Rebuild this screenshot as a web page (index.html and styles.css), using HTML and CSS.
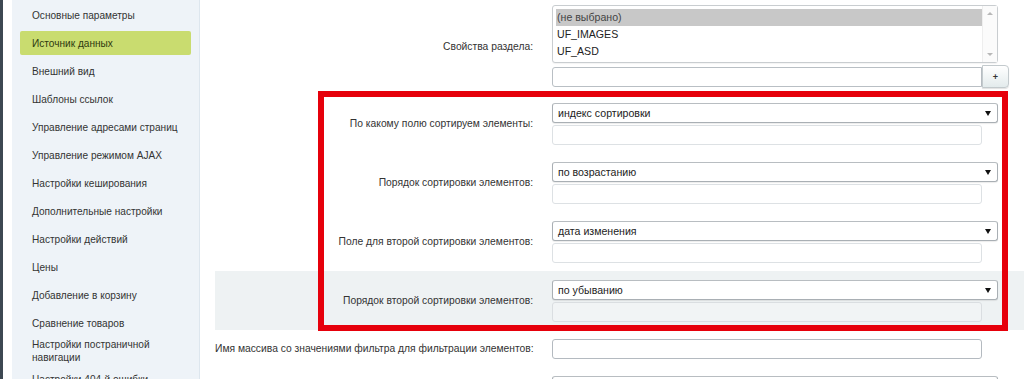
FILE: index.html
```html
<!DOCTYPE html>
<html lang="ru">
<head>
<meta charset="utf-8">
<title>Настройки компонента</title>
<link rel="stylesheet" href="styles.css">
</head>
<body>
<div class="page">
  <div class="rail"></div>
  <nav class="sidebar">
    <div class="nav-item">Основные параметры</div>
    <div class="nav-item active">Источник данных</div>
    <div class="nav-item">Внешний вид</div>
    <div class="nav-item">Шаблоны ссылок</div>
    <div class="nav-item">Управление адресами страниц</div>
    <div class="nav-item">Управление режимом AJAX</div>
    <div class="nav-item">Настройки кеширования</div>
    <div class="nav-item">Дополнительные настройки</div>
    <div class="nav-item">Настройки действий</div>
    <div class="nav-item">Цены</div>
    <div class="nav-item">Добавление в корзину</div>
    <div class="nav-item">Сравнение товаров</div>
    <div class="nav-item">Настройки постраничной навигации</div>
    <div class="nav-item">Настройки 404-й ошибки</div>
  </nav>
  <main class="main">
    <div class="row row-first">
      <div class="label">Свойства раздела:</div>
      <div class="controls">
        <div class="listbox">
          <div class="options">
            <div class="option selected">(не выбрано)</div>
            <div class="option">UF_IMAGES</div>
            <div class="option">UF_ASD</div>
          </div>
          <div class="scrollbar">
            <span class="sb-up"></span>
            <span class="sb-down"></span>
          </div>
        </div>
        <div class="add-line">
          <div class="input"></div>
          <div class="btn-add">+</div>
        </div>
      </div>
    </div>

    <div class="group">
      <div class="row">
        <div class="label">По какому полю сортируем элементы:</div>
        <div class="controls">
          <div class="select"><span>индекс сортировки</span><i class="arrow"></i></div>
          <div class="input light"></div>
        </div>
      </div>
      <div class="row">
        <div class="label">Порядок сортировки элементов:</div>
        <div class="controls">
          <div class="select"><span>по возрастанию</span><i class="arrow"></i></div>
          <div class="input light"></div>
        </div>
      </div>
      <div class="row">
        <div class="label">Поле для второй сортировки элементов:</div>
        <div class="controls">
          <div class="select"><span>дата изменения</span><i class="arrow"></i></div>
          <div class="input light"></div>
        </div>
      </div>
      <div class="row hover">
        <div class="label">Порядок второй сортировки элементов:</div>
        <div class="controls">
          <div class="select"><span>по убыванию</span><i class="arrow"></i></div>
          <div class="input disabled"></div>
        </div>
      </div>
      <div class="highlight"></div>
    </div>

    <div class="row row-single">
      <div class="label">Имя массива со значениями фильтра для фильтрации элементов:</div>
      <div class="controls">
        <div class="input dark"></div>
      </div>
    </div>
    <div class="row row-single">
      <div class="label"></div>
      <div class="controls">
        <div class="select"><span></span><i class="arrow"></i></div>
      </div>
    </div>
  </main>
</div>
</body>
</html>
```

FILE: styles.css
```css
* { box-sizing: border-box; }

html, body {
  margin: 0;
  padding: 0;
  background: #ffffff;
  height: 379px;
  overflow: hidden;
}

body {
  font-family: "Liberation Sans", Arial, sans-serif;
  font-size: 10.3px;
  color: #2b2b2b;
}

.page {
  display: flex;
  align-items: flex-start;
  height: 379px;
}

.rail {
  width: 3px;
  height: 379px;
  background: #3d4852;
  flex: none;
}

.sidebar {
  flex: none;
  width: 188px;
  height: 379px;
  margin-left: 9px;
  background: #eef3f8;
  border-right: 1px solid #dde6ee;
  padding: 3px 8px 0 8px;
  display: flex;
  flex-direction: column;
  gap: 4px;
  font-size: 10.1px;
}

.nav-item {
  min-height: 24px;
  padding: 1px 6px 1px 12px;
  display: flex;
  align-items: center;
  line-height: 13px;
  color: #333;
  border-radius: 2px;
}

.nav-item.active {
  background: #c9dc6f;
  color: #2f3a10;
}

.main {
  flex: 1;
  padding-left: 15px;
  display: flex;
  flex-direction: column;
  color: #333;
}

.row {
  display: flex;
  align-items: center;
  padding: 9px 0 8px 0;
}

.row-first {
  padding: 5px 0 6px 0;
}

.row.hover {
  background: #eef2f3;
}

.label {
  flex: none;
  width: 337px;
  padding-right: 19px;
  padding-bottom: 1px;
  text-align: right;
  line-height: 13px;
  white-space: nowrap;
}

.controls {
  display: flex;
  flex-direction: column;
  gap: 2px;
}

/* multi select */
.listbox {
  width: 446px;
  height: 58px;
  border: 1px solid #c9cdd0;
  border-radius: 3px;
  background: #fff;
  display: flex;
  box-shadow: 0 1px 1px rgba(0,0,0,0.05);
}

.options {
  flex: 1;
  padding: 3px 0 0 3px;
}

.option {
  height: 17px;
  line-height: 17px;
  padding-left: 1px;
  color: #222;
  font-size: 10.6px;
}

.option.selected {
  background: #c8c8c8;
  color: #444;
}

.scrollbar {
  flex: none;
  width: 15px;
  position: relative;
  background: #fbfbfb;
  border-left: 1px solid #eeeeee;
}

.sb-up, .sb-down {
  position: absolute;
  left: 4px;
  width: 0;
  height: 0;
  border-left: 3px solid transparent;
  border-right: 3px solid transparent;
}

.sb-up {
  top: 6px;
  border-bottom: 3px solid #b8b8b8;
}

.sb-down {
  bottom: 6px;
  border-top: 3px solid #b8b8b8;
}

.add-line {
  display: flex;
  align-items: center;
}

.input {
  width: 430px;
  height: 20px;
  background: #fff;
  border: 1px solid #b9bfc4;
  border-radius: 3px;
}

.add-line .input {
  height: 20px;
  border-radius: 3px 0 0 3px;
}

.input.light {
  border-color: #dde1e4;
}

.input.disabled {
  border-color: #dadee1;
  background: #f1f4f5;
}

.input.dark {
  border-color: #b4bac0;
}

.btn-add {
  width: 27px;
  height: 23px;
  border: 1px solid #c3cacd;
  border-radius: 0 4px 4px 0;
  background: linear-gradient(#ffffff, #e3ebec);
  color: #333;
  font-size: 9px;
  font-weight: bold;
  display: flex;
  align-items: center;
  justify-content: center;
  box-shadow: 0 1px 1px rgba(0,0,0,0.12);
}

/* dropdown */
.select {
  width: 446px;
  height: 20px;
  border: 1px solid #a9afb4;
  border-top-color: #b8bdc1;
  border-radius: 3px;
  background: #fff;
  display: flex;
  align-items: center;
  padding: 0 5px 0 5px;
  box-shadow: 0 1px 1px rgba(0,0,0,0.08);
  color: #222;
  font-size: 10.6px;
}

.select span {
  flex: 1;
}

.arrow {
  width: 0;
  height: 0;
  border-left: 3px solid transparent;
  border-right: 3px solid transparent;
  border-top: 5px solid #111;
  margin-right: 1px;
}

/* annotation frame */
.group {
  position: relative;
  display: flex;
  flex-direction: column;
}

.highlight {
  position: absolute;
  left: 103px;
  top: -3px;
  right: 16px;
  bottom: -1px;
  border: 6px solid #e6000b;
  pointer-events: none;
}
```
